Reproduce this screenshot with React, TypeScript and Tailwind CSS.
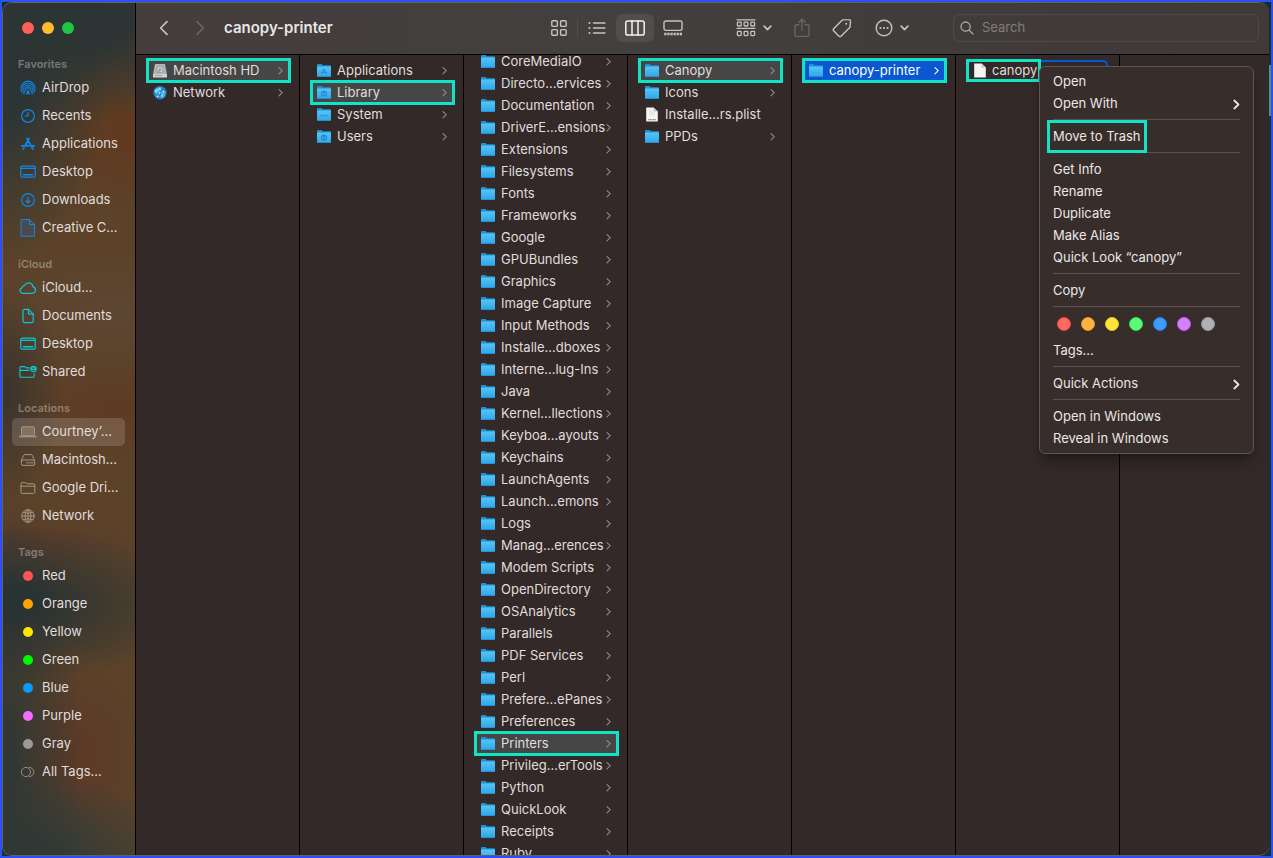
import React from 'react';

type IconProps = { className?: string };

const Svg: React.FC<{ w: number; h: number; className?: string; sw?: number; children: React.ReactNode }> = ({ w, h, className, sw = 1.2, children }) => (
  <svg
    width={w}
    height={h}
    viewBox={`0 0 ${w} ${h}`}
    className={className}
    fill="none"
    stroke="currentColor"
    strokeWidth={sw}
    strokeLinecap="round"
    strokeLinejoin="round"
    aria-hidden="true"
  >
    {children}
  </svg>
);

/* ---------- sidebar icons ---------- */

const AirDropIcon = () => (
  <Svg w={16} h={16} sw={1.1}>
    <path d="M4.2 14A7 7 0 1 1 11.8 14" />
    <path d="M5 12A5 5 0 1 1 11 12" />
    <path d="M6 10.3A3 3 0 1 1 10 10.3" />
    <path d="M7.2 8.8A1.1 1.1 0 1 1 8.8 8.8" />
    <path d="M8 9.5L5.8 14.2H10.2Z" fill="currentColor" stroke="none" />
  </Svg>
);

const ClockIcon = () => (
  <Svg w={16} h={16}>
    <circle cx="8" cy="8" r="6.3" />
    <path d="M8 4V8H5" />
  </Svg>
);

const AppsIcon = () => (
  <Svg w={16} h={16} sw={1.7}>
    <path d="M7 2.5L12.8 13M9 2.5L5.2 9.5M3.9 12L3.3 13M1.8 9.8H9M11.8 9.8H14.2" />
  </Svg>
);

const DesktopIcon = () => (
  <Svg w={16} h={16} sw={1.2}>
    <rect x="0.8" y="2.2" width="14.4" height="11" rx="1.4" />
    <path d="M1 4.4H15" />
    <path d="M3.6 10.8H12.4" strokeWidth="1.6" />
  </Svg>
);

const DownloadIcon = () => (
  <Svg w={16} h={16}>
    <circle cx="8" cy="8" r="6.3" />
    <path d="M8 5V10.8M5.8 8.8L8 11L10.2 8.8" />
  </Svg>
);

const BigFileIcon = () => (
  <Svg w={16} h={18} sw={1}>
    <path d="M1.5 0.5H9.5L14.5 5.5V17.2H1.5Z" fill="#4b4b4d" />
    <path d="M9.5 0.5V5.5H14.5" />
  </Svg>
);

const CloudIcon = () => (
  <Svg w={18} h={14}>
    <path d="M4.4 12.3H13.4A3.3 3.3 0 0 0 14 5.8A4.5 4.5 0 0 0 5.5 4.4A2.6 2.6 0 0 0 3.2 6.8A2.8 2.8 0 0 0 4.4 12.3Z" />
  </Svg>
);

const DocIcon = () => (
  <Svg w={16} h={16}>
    <path d="M3 3A1.6 1.6 0 0 1 4.6 1.4H8.4L13.2 6.2V13A1.6 1.6 0 0 1 11.6 14.6H4.6A1.6 1.6 0 0 1 3 13Z" />
    <path d="M8.4 1.4V5.2A1 1 0 0 0 9.4 6.2H13.2" />
  </Svg>
);

const SharedIcon = () => (
  <Svg w={18} h={16} sw={1.1}>
    <path d="M10.5 3.9H7.2L5.8 2.6H2.2A1.3 1.3 0 0 0 0.9 3.9V12A1.3 1.3 0 0 0 2.2 13.3H13.9A1.3 1.3 0 0 0 15.2 12V9.5M0.9 6.4H10" />
    <circle cx="14.5" cy="5" r="3.2" fill="currentColor" stroke="none" />
    <circle cx="14.5" cy="4.2" r="0.9" fill="#4e3f2e" stroke="none" />
    <path d="M13 6.6H16" stroke="#4e3f2e" strokeWidth="0.9" />
  </Svg>
);

const LaptopIcon = () => (
  <Svg w={18} h={14} sw={1}>
    <rect x="2.5" y="1.8" width="13" height="9" rx="1" fill="#85705b" />
    <path d="M0.8 11.5H17.2" strokeWidth="1.4" />
  </Svg>
);

const DriveIcon = () => (
  <Svg w={16} h={14} sw={1}>
    <path d="M3.6 2.5A1.4 1.4 0 0 1 5 1.6H11A1.4 1.4 0 0 1 12.4 2.5L14.6 7.5V10.8A1.6 1.6 0 0 1 13 12.4H3A1.6 1.6 0 0 1 1.4 10.8V7.5Z" />
    <path d="M1.6 8A1.5 1.5 0 0 1 3 7H13A1.5 1.5 0 0 1 14.4 8" />
    <path d="M6.5 9.8H13" strokeWidth="1.6" strokeOpacity="0.6" />
  </Svg>
);

const FolderOutlineIcon = () => (
  <Svg w={16} h={14} sw={1}>
    <path d="M1 2.8A1.2 1.2 0 0 1 2.2 1.6H5.4L6.8 2.8H13.6A1.2 1.2 0 0 1 14.8 4V11.2A1.2 1.2 0 0 1 13.6 12.4H2.2A1.2 1.2 0 0 1 1 11.2ZM1 5.2H14.8" />
  </Svg>
);

const GlobeIcon = () => (
  <Svg w={16} h={16} sw={1}>
    <circle cx="8" cy="8" r="6.2" />
    <ellipse cx="8" cy="8" rx="2.9" ry="6.2" />
    <path d="M1.8 8H14.2M8 1.8V14.2M3.2 4.4Q8 6.4 12.8 4.4M3.2 11.6Q8 9.6 12.8 11.6" />
  </Svg>
);

const AllTagsIcon = () => (
  <Svg w={16} h={12} sw={1}>
    <circle cx="6" cy="6" r="4.6" />
    <path d="M9.3 1.4A4.6 4.6 0 1 1 9.3 10.6" />
  </Svg>
);

/* ---------- file icons ---------- */

const FolderIcon: React.FC<{ mark?: string }> = ({ mark }) => (
  <svg width="14" height="14" viewBox="0 0 14 14" className="shrink-0" aria-hidden="true">
    <defs>
      <linearGradient id="folderFront" x1="0" y1="0" x2="0" y2="1">
        <stop offset="0" stopColor="#55c4fa" />
        <stop offset="1" stopColor="#2fa6e6" />
      </linearGradient>
    </defs>
    <path d="M0 1A0.9 0.9 0 0 1 0.9 0.1H4.6L5.8 1.2H13.1A0.9 0.9 0 0 1 14 2.1V5H0Z" fill="#1f93cd" />
    <path d="M0 2.6H14V12.1A0.9 0.9 0 0 1 13.1 13H0.9A0.9 0.9 0 0 1 0 12.1Z" fill="url(#folderFront)" />
    <path d="M0 12H14V12.1A0.9 0.9 0 0 1 13.1 13H0.9A0.9 0.9 0 0 1 0 12.1Z" fill="#2391cf" />
    {mark === 'apps' && <path d="M7 5L9.4 10M7 5L4.6 10M4.3 8.3H9.7" stroke="#2489c4" fill="none" />}
    {mark === 'library' && <path d="M4 6.4L7 4.8L10 6.4ZM4.8 7V9M7 7V9M9.2 7V9M4 9.8H10" stroke="#2489c4" strokeWidth="0.9" fill="none" />}
    {mark === 'system' && <path d="M3 7.6H11" stroke="#2f98d2" strokeWidth="1.6" strokeDasharray="1.4 0.5" />}
    {mark === 'users' && (
      <>
        <circle cx="7" cy="7.5" r="2.5" stroke="#1b7db8" fill="none" />
        <circle cx="7" cy="7" r="0.9" fill="#1b7db8" />
        <path d="M5.4 9.2Q7 7.6 8.6 9.2Z" fill="#1b7db8" />
      </>
    )}
  </svg>
);

const DiskIcon = () => (
  <svg width="14" height="14" viewBox="0 0 14 14" className="shrink-0" aria-hidden="true">
    <path d="M2 0H12L14 10.6H0Z" fill="#aeb4b7" />
    <rect x="0" y="10" width="14" height="3.4" rx="0.6" fill="#d0d4d5" />
    <circle cx="7" cy="5.4" r="3.8" fill="#9ca2a5" />
    <circle cx="7" cy="5.4" r="2.8" fill="#c3c8ca" />
    <circle cx="7" cy="5.4" r="0.8" fill="#7c8285" />
    <path d="M7 6L4.4 9.4" stroke="#7c8285" strokeWidth="0.8" />
    <path d="M2 11.6H9" stroke="#8d9396" strokeWidth="0.8" />
  </svg>
);

const NetworkIcon = () => (
  <svg width="14" height="14" viewBox="0 0 14 14" className="shrink-0" aria-hidden="true">
    <circle cx="7" cy="6.8" r="6.7" fill="#1f86c4" />
    <path d="M1 5Q4 1 8 1.4L6 5L3 8Z" fill="#5cc5ee" />
    <path d="M8 7L12.6 5L12 10L8 12.6Z" fill="#43b0e0" />
    <path d="M3 4.5L7 3L10.5 5.5L9 10L4.5 10.5ZM7 3L6.5 7L4.5 10.5M6.5 7L10.5 5.5M6.5 7L3 4.5" stroke="#a9def5" strokeWidth="0.4" fill="none" />
    <g fill="#d9f3fd">
      <circle cx="7" cy="3" r="0.8" />
      <circle cx="10.5" cy="5.5" r="0.8" />
      <circle cx="4.5" cy="10.5" r="0.8" />
      <circle cx="6.5" cy="7" r="0.8" />
      <circle cx="3" cy="4.5" r="0.6" />
      <circle cx="9" cy="10" r="0.7" />
    </g>
  </svg>
);

const PageIcon: React.FC<{ plist?: boolean }> = ({ plist }) => (
  <svg width="14" height="16" viewBox="0 0 14 16" className="shrink-0" aria-hidden="true">
    <path d="M1.2 0.4H8.6L12.8 4.6V14.6H1.2Z" fill="#f4f4f4" />
    <path d="M8.6 0.4V4.6H12.8Z" fill="#c4c4c4" />
    {plist && <path d="M4 3.9H7.6M4 5.9H9.6M4 7.9H9.6" stroke="#d8d8d8" strokeWidth="0.8" />}
    {plist && <path d="M3.2 12.6H10.8" stroke="#8a8a8a" strokeWidth="1.2" strokeDasharray="1.2 0.4" />}
  </svg>
);

const RowChevron: React.FC<IconProps> = ({ className }) => (
  <Svg w={5} h={8} sw={1.1} className={className}>
    <path d="M1 0.6L4.2 3.7L1 6.8" />
  </Svg>
);

const DownChevron = () => (
  <Svg w={9} h={6} sw={1.7}>
    <path d="M1.2 1.2L4.5 4.6L7.8 1.2" />
  </Svg>
);

/* ---------- data ---------- */

const sections = [
  {
    title: 'Favorites',
    color: 'text-[#0f87ea]',
    items: [
      { label: 'AirDrop', icon: <AirDropIcon /> },
      { label: 'Recents', icon: <ClockIcon /> },
      { label: 'Applications', icon: <AppsIcon /> },
      { label: 'Desktop', icon: <DesktopIcon /> },
      { label: 'Downloads', icon: <DownloadIcon /> },
      { label: 'Creative C...', icon: <BigFileIcon /> },
    ],
  },
  {
    title: 'iCloud',
    color: 'text-[#0cc6d4]',
    items: [
      { label: 'iCloud...', icon: <CloudIcon /> },
      { label: 'Documents', icon: <DocIcon /> },
      { label: 'Desktop', icon: <DesktopIcon /> },
      { label: 'Shared', icon: <SharedIcon /> },
    ],
  },
  {
    title: 'Locations',
    color: 'text-[#a39686]',
    items: [
      { label: 'Courtney’...', icon: <LaptopIcon />, active: true },
      { label: 'Macintosh...', icon: <DriveIcon /> },
      { label: 'Google Dri...', icon: <FolderOutlineIcon /> },
      { label: 'Network', icon: <GlobeIcon /> },
    ],
  },
  {
    title: 'Tags',
    color: 'text-[#958e88]',
    items: [
      { label: 'Red', icon: <span className="size-[10px] rounded-full bg-[#ff5650]" /> },
      { label: 'Orange', icon: <span className="size-[10px] rounded-full bg-[#ffa500]" /> },
      { label: 'Yellow', icon: <span className="size-[10px] rounded-full bg-[#ffe600]" /> },
      { label: 'Green', icon: <span className="size-[10px] rounded-full bg-[#00f900]" /> },
      { label: 'Blue', icon: <span className="size-[10px] rounded-full bg-[#0a9bff]" /> },
      { label: 'Purple', icon: <span className="size-[10px] rounded-full bg-[#f36bff]" /> },
      { label: 'Gray', icon: <span className="size-[10px] rounded-full bg-[#9d9896]" /> },
      { label: 'All Tags...', icon: <AllTagsIcon /> },
    ],
  },
];

const libraryFolders = [
  'CoreMediaIO', 'Directo...ervices', 'Documentation', 'DriverE...ensions', 'Extensions', 'Filesystems',
  'Fonts', 'Frameworks', 'Google', 'GPUBundles', 'Graphics', 'Image Capture', 'Input Methods',
  'Installe...dboxes', 'Interne...lug-Ins', 'Java', 'Kernel...llections', 'Keyboa...ayouts', 'Keychains',
  'LaunchAgents', 'Launch...emons', 'Logs', 'Manag...erences', 'Modem Scripts', 'OpenDirectory',
  'OSAnalytics', 'Parallels', 'PDF Services', 'Perl', 'Prefere...ePanes', 'Preferences', 'Printers',
  'Privileg...erTools', 'Python', 'QuickLook', 'Receipts', 'Ruby',
];

const tagColors = [
  'bg-[#ff6961] border-[#e8453c]',
  'bg-[#ffb340] border-[#e8941a]',
  'bg-[#ffe53b] border-[#e3c81c]',
  'bg-[#5dfb73] border-[#34d94c]',
  'bg-[#409cff] border-[#1c7fe8]',
  'bg-[#d581ff] border-[#b95bea]',
  'bg-[#b0b0b5] border-[#96969b]',
];

/* ---------- pieces ---------- */

type RowProps = {
  label: string;
  icon?: React.ReactNode;
  selected?: 'gray' | 'blue';
  leaf?: boolean;
};

const Row: React.FC<RowProps> = ({ label, icon = <FolderIcon />, selected, leaf }) => (
  <li className="relative ml-[10px] mr-2 h-[22px]">
    <button
      type="button"
      className={`flex h-full w-full items-center pl-[7px] pr-2 text-left ${
        selected === 'blue' ? 'bg-[#0a57d0] text-white' : selected === 'gray' ? 'bg-[#474646]' : ''
      }`}
    >
      {icon}
      <span className="ml-[6px] grow whitespace-nowrap">{label}</span>
      {!leaf && <RowChevron className={selected === 'blue' ? 'text-white' : 'text-[#928c8b]'} />}
    </button>
    {selected && <span className="pointer-events-none absolute inset-x-0 -top-[2px] -bottom-px border-3 border-[#13e3c5]" />}
  </li>
);

const Column: React.FC<{ children?: React.ReactNode }> = ({ children }) => (
  <ul className="w-[164px] shrink-0 border-r border-black pt-[5px]">{children}</ul>
);

const Sidebar = () => (
  <aside className="flex w-[133px] shrink-0 flex-col border-r border-black bg-[#5b4229] bg-[radial-gradient(ellipse_110px_210px_at_0px_50px,#2c3534_30%,transparent),radial-gradient(ellipse_200px_120px_at_60px_0px,#2d3433_40%,transparent),radial-gradient(ellipse_60px_110px_at_0px_390px,#38332d,transparent),radial-gradient(ellipse_190px_80px_at_0px_600px,#2a3333_20%,transparent),radial-gradient(ellipse_80px_280px_at_0px_760px,#303734_10%,transparent),radial-gradient(ellipse_170px_90px_at_10px_856px,#303a38_25%,transparent),radial-gradient(ellipse_120px_80px_at_133px_130px,#61391f,transparent),radial-gradient(ellipse_110px_50px_at_110px_405px,#5f3a23,transparent),radial-gradient(ellipse_120px_30px_at_20px_540px,#5c3c29,transparent),radial-gradient(ellipse_80px_90px_at_70px_750px,#5d3926,transparent),radial-gradient(ellipse_140px_60px_at_110px_310px,#5d4633,transparent)]">
    <div className="flex h-[51px] shrink-0 items-center gap-2 pb-px pl-[19px]">
      <button type="button" aria-label="Close" className="size-3 rounded-full bg-[#ff5f57]" />
      <button type="button" aria-label="Minimize" className="size-3 rounded-full bg-[#febc2e]" />
      <button type="button" aria-label="Zoom" className="size-3 rounded-full bg-[#1fc63f]" />
    </div>
    <nav className="flex flex-col gap-3 pl-[9px] pr-[10px]">
      {sections.map((section) => (
        <div key={section.title}>
          <h2 className="h-5 pl-[6px] text-[11px] leading-5 font-semibold text-white/35">{section.title}</h2>
          <ul>
            {section.items.map((item) => (
              <li key={item.label}>
                <a
                  href="#"
                  className={`flex h-7 items-center gap-1 rounded-[5px] pl-[6px] whitespace-nowrap ${'active' in item && item.active ? 'bg-white/15' : ''}`}
                >
                  <span className={`flex w-5 shrink-0 justify-center ${section.color}`}>{item.icon}</span>
                  {item.label}
                </a>
              </li>
            ))}
          </ul>
        </div>
      ))}
    </nav>
  </aside>
);

const Toolbar = () => (
  <header className="flex h-[52px] shrink-0 items-center border-b border-black bg-linear-to-r from-[#443d3c] via-[#42403e] via-40% to-[#3f3938] pb-px pl-3 pr-[10px] text-[#c6c2c1]">
    <button type="button" aria-label="Back" className="flex w-8 justify-center">
      <Svg w={10} h={16} sw={1.7}><path d="M8 1.6L1.6 8L8 14.4" /></Svg>
    </button>
    <button type="button" aria-label="Forward" className="ml-1 flex w-8 justify-center text-[#6a6362]">
      <Svg w={10} h={16} sw={1.7}><path d="M2 1.6L8.4 8L2 14.4" /></Svg>
    </button>
    <h1 className="ml-2 grow text-[15px] font-semibold text-[#e9e6e5]">canopy-printer</h1>

    <div className="flex items-center">
      <button type="button" aria-label="Icon view" className="flex h-7 w-9 items-center justify-center">
        <Svg w={16} h={16} sw={1.4}>
          <rect x="0.8" y="0.8" width="5.6" height="5.6" rx="1" />
          <rect x="9.6" y="0.8" width="5.6" height="5.6" rx="1" />
          <rect x="0.8" y="9.6" width="5.6" height="5.6" rx="1" />
          <rect x="9.6" y="9.6" width="5.6" height="5.6" rx="1" />
        </Svg>
      </button>
      <span className="h-5 w-px bg-white/8" />
      <button type="button" aria-label="List view" className="flex h-7 w-[38px] items-center justify-center">
        <Svg w={18} h={14} sw={1.4}>
          <path d="M5.5 2H17M5.5 7H17M5.5 12H17" />
          <path d="M1.4 2H1.5M1.4 7H1.5M1.4 12H1.5" strokeWidth="2" />
        </Svg>
      </button>
      <button type="button" aria-label="Column view" className="flex h-7 w-[38px] items-center justify-center rounded-md bg-white/8 text-[#f3f1f0]">
        <Svg w={20} h={16} sw={1.5}>
          <rect x="0.8" y="1" width="18.4" height="14" rx="1.8" />
          <path d="M7 1V15M13 1V15" />
        </Svg>
      </button>
      <button type="button" aria-label="Gallery view" className="flex h-7 w-[38px] items-center justify-center">
        <Svg w={20} h={16} sw={1.4}>
          <rect x="1" y="1" width="18" height="9.4" rx="1.8" />
          <path d="M1.2 14H19" strokeWidth="2.4" strokeLinecap="butt" strokeDasharray="2.3 0.8" />
        </Svg>
      </button>
    </div>

    <button type="button" aria-label="Group items" className="ml-11 flex w-9 items-center justify-between">
      <Svg w={20} h={18} sw={1.3}>
        <path d="M1 0.8H19M1 9.3H19" />
        <g>
          <rect x="1.4" y="3.2" width="3.8" height="3.8" rx="0.8" />
          <rect x="8.1" y="3.2" width="3.8" height="3.8" rx="0.8" />
          <rect x="14.8" y="3.2" width="3.8" height="3.8" rx="0.8" />
          <rect x="1.4" y="12.4" width="3.8" height="4.2" rx="0.8" />
          <rect x="8.1" y="12.4" width="3.8" height="4.2" rx="0.8" />
          <rect x="14.8" y="12.4" width="3.8" height="4.2" rx="0.8" />
        </g>
      </Svg>
      <DownChevron />
    </button>
    <button type="button" aria-label="Share" className="ml-[10px] flex w-10 justify-center text-[#6b6463]">
      <Svg w={16} h={20} sw={1.4}>
        <path d="M5 6.8H2.4A1.4 1.4 0 0 0 1 8.2V17A1.4 1.4 0 0 0 2.4 18.4H13.6A1.4 1.4 0 0 0 15 17V8.2A1.4 1.4 0 0 0 13.6 6.8H11M8 12.4V1.4M4.9 4.2L8 1.2L11.1 4.2" />
      </Svg>
    </button>
    <button type="button" aria-label="Edit tags" className="flex w-10 justify-center">
      <Svg w={20} h={20} sw={1.4}>
        <path d="M11.2 1.9L17 1.6A1.4 1.4 0 0 1 18.5 3.1L18.1 8.4A2 2 0 0 1 17.5 9.7L9 18.2A1.4 1.4 0 0 1 7 18.2L1.6 12.8A1.4 1.4 0 0 1 1.6 10.8L9.8 2.6A2.2 2.2 0 0 1 11.2 1.9Z" />
        <circle cx="14.2" cy="5.8" r="1" fill="currentColor" stroke="none" />
      </Svg>
    </button>
    <button type="button" aria-label="More actions" className="ml-[13px] flex w-[34px] items-center justify-between">
      <Svg w={18} h={18} sw={1.4}>
        <circle cx="9" cy="9" r="7.8" />
        <path d="M5.4 9H5.5M8.95 9H9.05M12.5 9H12.6" strokeWidth="2.1" />
      </Svg>
      <DownChevron />
    </button>

    <label className="ml-11 flex h-7 w-[306px] items-center gap-2 rounded-md border border-white/8 pl-[6px]">
      <Svg w={14} h={14} sw={1.3} className="shrink-0 text-[#aca7a6]">
        <circle cx="5.6" cy="5.6" r="4.6" />
        <path d="M9.2 9.2L13 13" />
      </Svg>
      <input type="search" aria-label="Search" placeholder="Search" className="w-full bg-transparent text-[13px] text-white outline-none placeholder:text-[#837c7b]" />
    </label>
  </header>
);

const MenuItem: React.FC<{ label: string; submenu?: boolean; boxed?: boolean }> = ({ label, submenu, boxed }) => (
  <button type="button" role="menuitem" className="flex h-[22px] w-full items-center justify-between whitespace-nowrap">
    <span className="relative">
      {label}
      {boxed && <span className="absolute -inset-x-[6px] -top-[7px] -bottom-[6px] border-3 border-[#13e3c5]" />}
    </span>
    {submenu && <Svg w={7} h={11} sw={1.8}><path d="M1.3 1.5L5.5 5.5L1.3 9.5" /></Svg>}
  </button>
);

const Separator = () => <div role="separator" className="mt-1 mb-[6px] h-px bg-[#5c5351]" />;

const ContextMenu = () => (
  <div role="menu" className="absolute top-[6px] left-[73px] z-10 w-[215px] rounded-md border border-[#5e5654] bg-[#372d2b] px-[13px] pt-1 pb-[3px] text-[#eae7e6] shadow-lg shadow-black/30">
    <MenuItem label="Open" />
    <MenuItem label="Open With" submenu />
    <Separator />
    <MenuItem label="Move to Trash" boxed />
    <Separator />
    <MenuItem label="Get Info" />
    <MenuItem label="Rename" />
    <MenuItem label="Duplicate" />
    <MenuItem label="Make Alias" />
    <MenuItem label="Quick Look “canopy”" />
    <Separator />
    <MenuItem label="Copy" />
    <Separator />
    <div className="mb-[5px] flex h-[22px] items-center gap-[10px] pl-1">
      {tagColors.map((color) => (
        <button key={color} type="button" aria-label="Tag color" className={`size-[14px] rounded-full border ${color}`} />
      ))}
    </div>
    <MenuItem label="Tags..." />
    <Separator />
    <MenuItem label="Quick Actions" submenu />
    <Separator />
    <MenuItem label="Open in Windows" />
    <MenuItem label="Reveal in Windows" />
  </div>
);

const App: React.FC = () => {
  return (
    <div className="h-screen border-2 border-[#2b50f5] bg-[linear-gradient(#15302c_63px,#4f8f86_63px,#4f8f86_114px,#123434_114px)] pr-[2px] font-['Inter',sans-serif] text-[13px] text-[#e0dddc]">
      <div className="flex h-full overflow-hidden rounded-[10px] border border-r-0 border-[#66605e] bg-[#322928]">
        <Sidebar />
        <main className="flex min-w-0 grow flex-col">
          <Toolbar />
          <div className="flex min-h-0 grow overflow-hidden">
            <Column>
              <Row label="Macintosh HD" icon={<DiskIcon />} selected="gray" />
              <Row label="Network" icon={<NetworkIcon />} />
            </Column>
            <Column>
              <Row label="Applications" icon={<FolderIcon mark="apps" />} />
              <Row label="Library" icon={<FolderIcon mark="library" />} selected="gray" />
              <Row label="System" icon={<FolderIcon mark="system" />} />
              <Row label="Users" icon={<FolderIcon mark="users" />} />
            </Column>
            <div className="overflow-hidden">
              {/* scrolled down a little, so the first folder is cut off */}
              <div className="-mt-[9px] flex">
                <Column>
                  {libraryFolders.map((name) => (
                    <Row key={name} label={name} selected={name === 'Printers' ? 'gray' : undefined} />
                  ))}
                </Column>
              </div>
            </div>
            <Column>
              <Row label="Canopy" selected="gray" />
              <Row label="Icons" />
              <Row label="Installe...rs.plist" icon={<PageIcon plist />} leaf />
              <Row label="PPDs" />
            </Column>
            <Column>
              <Row label="canopy-printer" selected="blue" />
            </Column>
            <Column>
              <li className="relative ml-[10px] mr-[11px] h-[22px]">
                <button type="button" className="flex h-full w-full items-center rounded-[5px] border-2 border-[#0a57d0] pl-[5px] text-left">
                  <PageIcon />
                  <span className="ml-[5px]">canopy</span>
                </button>
                <span className="pointer-events-none absolute -top-px bottom-0 left-0 w-[75px] border-3 border-[#13e3c5]" />
                <ContextMenu />
              </li>
            </Column>
            <ul className="grow" />
          </div>
        </main>
      </div>
    </div>
  );
};

export default App;
